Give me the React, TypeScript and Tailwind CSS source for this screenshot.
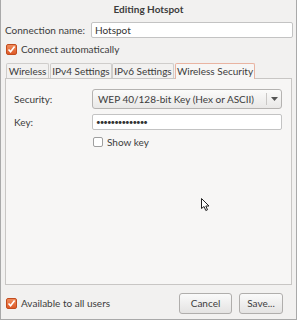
import React from 'react';

const font = { fontFamily: 'Lato, "Liberation Sans", sans-serif' };

const OrangeCheck: React.FC = () => (
    <span className="w-[11px] h-[11px] rounded-[2px] bg-gradient-to-b from-[#f08c5c] to-[#dd5a28] border border-[#c24c1e] flex items-center justify-center shrink-0">
        <svg width="9" height="9" viewBox="0 0 9 9">
            <path d="M1.5 4.5 L3.6 6.8 L7.6 1.6" fill="none" stroke="#ffffff" strokeWidth="1.6" />
        </svg>
    </span>
);

const EmptyCheck: React.FC = () => (
    <span className="w-[10px] h-[10px] rounded-[2px] bg-white border border-[#9f9f9f] shrink-0" />
);

const tabs = [
    { label: 'Wireless', cls: 'w-[43px] ml-[1px]' },
    { label: 'IPv4 Settings', cls: 'w-[62px] ml-[1px]' },
    { label: 'IPv6 Settings', cls: 'w-[62px]' },
    { label: 'Wireless Security', cls: 'w-[80px] ml-[1px]' },
];

const App: React.FC = () => {
    return (
        <div style={font} className="relative w-[297px] h-[320px] bg-[#f2f1f0] border-x border-b border-[#a9a9a9] text-[10px] text-[#3c3c3c] flex flex-col overflow-hidden whitespace-nowrap">
            <div className="h-[19px] flex items-center justify-center font-bold text-[#3c3c3c]">
                Editing Hotspot
            </div>

            <div className="mt-[3px] flex items-center pl-[4px] pr-[3px]">
                <span className="w-[86px]">Connection name:</span>
                <div className="flex-1 h-[16px] bg-white border border-[#c3c3c3] rounded-[2px] flex items-center pl-[3px] text-[#333]">
                    Hotspot
                </div>
            </div>

            <div className="mt-[4px] h-[15px] flex items-center gap-[4px] pl-[5px]">
                <OrangeCheck />
                <span>Connect automatically</span>
            </div>

            <div className="mt-[5px] mx-[4px] flex items-end h-[16px]">
                {tabs.map((t, i) => {
                    const active = i === tabs.length - 1;
                    return (
                        <div
                            key={t.label}
                            className={
                                active
                                    ? `${t.cls} h-[16px] flex items-center justify-center bg-[#f7f6f5] border border-b-0 border-[#e9b4a2] rounded-t-[2px] -mb-px relative z-10`
                                    : `${t.cls} h-[15px] flex items-center justify-center border border-b-0 border-[#cfcdcb] rounded-t-[2px]`
                            }
                        >
                            {t.label}
                        </div>
                    );
                })}
            </div>

            <div className="mx-[4px] h-[207px] border border-[#c8c6c4] bg-[#f7f6f5] flex flex-col pt-[10px] pl-[8px] pr-[9px]">
                <div className="flex items-center h-[20px]">
                    <span className="w-[78px]">Security:</span>
                    <div className="flex-1 h-[20px] rounded-[3px] border border-[#b5b3b1] bg-gradient-to-b from-[#fbfbfa] to-[#e9e8e7] flex items-center">
                        <span className="flex-1 pl-[5px]">WEP 40/128-bit Key (Hex or ASCII)</span>
                        <span className="w-px h-[12px] bg-[#c9c7c5]" />
                        <span className="w-[14px] flex items-center justify-center">
                            <svg width="7" height="4" viewBox="0 0 7 4">
                                <path d="M0 0 L7 0 L3.5 4 Z" fill="#555" />
                            </svg>
                        </span>
                    </div>
                </div>

                <div className="flex items-center h-[16px] mt-[5px]">
                    <span className="w-[78px]">Key:</span>
                    <div className="flex-1 h-[16px] bg-white border border-[#c3c3c3] rounded-[2px] flex items-center pl-[3px] text-[#333] text-[8px] tracking-[-1px] leading-none">
                        ••••••••••••••
                    </div>
                </div>

                <div className="flex items-center gap-[4px] h-[14px] mt-[5px] pl-[79px]">
                    <EmptyCheck />
                    <span>Show key</span>
                </div>
            </div>

            <div className="mt-[8px] flex items-center pl-[5px] pr-[13px]">
                <div className="flex items-center gap-[4px]">
                    <OrangeCheck />
                    <span>Available to all users</span>
                </div>
                <div className="ml-auto flex gap-[7px]">
                    <button className="w-[53px] h-[21px] rounded-[3px] border border-[#b0aeac] bg-gradient-to-b from-[#fafafa] to-[#e4e3e2] text-[#3c3c3c]">
                        Cancel
                    </button>
                    <button className="w-[44px] h-[21px] rounded-[3px] border border-[#b0aeac] bg-gradient-to-b from-[#fafafa] to-[#e4e3e2] text-[#3c3c3c]">
                        Save...
                    </button>
                </div>
            </div>

            <svg className="absolute left-[200px] top-[198px]" width="10" height="14" viewBox="0 0 10 14">
                <path d="M0.5 0.5 L0.5 10.5 L3 8.5 L4.8 12.5 L6.5 11.8 L4.8 8 L8 8 Z" fill="#ffffff" stroke="#222" strokeWidth="1" />
            </svg>
        </div>
    );
};

export default App;
